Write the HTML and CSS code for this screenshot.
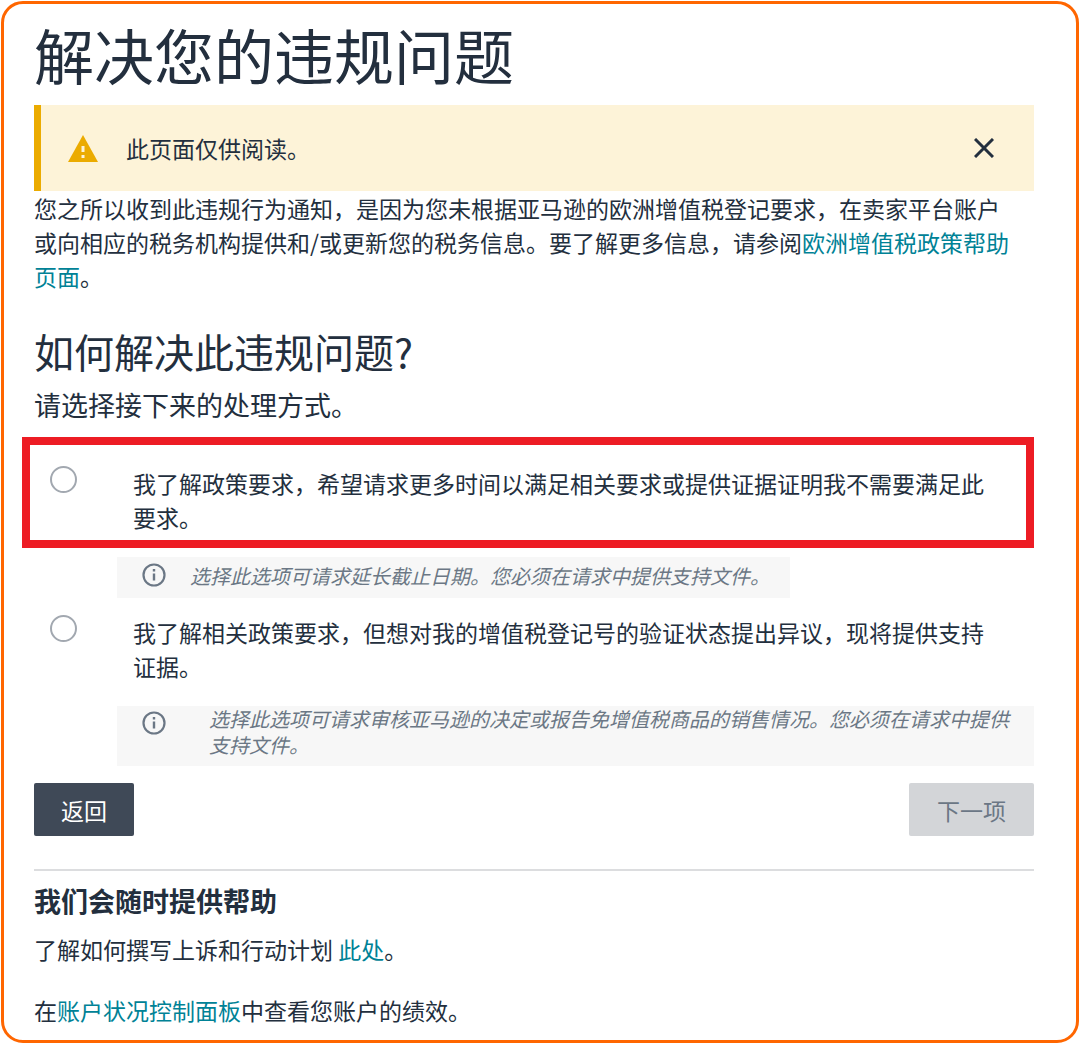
FILE: index.html
```html
<!DOCTYPE html>
<html lang="zh-CN">
<head>
  <meta charset="UTF-8">
  <meta name="viewport" content="width=device-width, initial-scale=1">
  <title>解决您的违规问题</title>
  <link rel="stylesheet" href="styles.css">
</head>
<body>
  <main class="card">
    <h1>解决您的违规问题</h1>

    <div class="alert" role="alert">
      <svg class="alert-icon" viewBox="0 0 30 27" aria-hidden="true">
        <path d="M15 0 L30 27 H0 Z" fill="#ebab00"/>
        <path d="M13.500 11 h3 v6 h-3 z M13.500 20 h3 v3 h-3 z" fill="#fdf3d8"/>
      </svg>
      <span class="alert-text">此页面仅供阅读。</span>
      <button type="button" class="alert-close" aria-label="关闭">
        <svg viewBox="0 0 20 20" aria-hidden="true">
          <path d="M1 1 L19 19 M19 1 L1 19" fill="none" stroke="#232f3e" stroke-width="3"/>
        </svg>
      </button>
    </div>

    <p class="intro">您之所以收到此违规行为通知，是因为您未根据亚马逊的欧洲增值税登记要求，在卖家平台账户或向相应的税务机构提供和/或更新您的税务信息。要了解更多信息，请参阅<a href="#">欧洲增值税政策帮助页面</a>。</p>

    <form id="resolveForm">
      <h2>如何解决此违规问题?</h2>
      <p class="lead">请选择接下来的处理方式。</p>

      <div class="option option-highlight">
        <input type="radio" id="moreTime" name="resolution" value="more-time">
        <label for="moreTime">我了解政策要求，希望请求更多时间以满足相关要求或提供证据证明我不需要满足此要求。</label>
      </div>
      <div class="hint hint-short">
        <svg class="info-icon" viewBox="0 0 24 24" aria-hidden="true">
          <circle cx="12" cy="12" r="10.500" fill="none" stroke="#6b7785" stroke-width="2.200"/>
          <path d="M12 6 v2.600 M12 10.500 v7" stroke="#6b7785" stroke-width="2.400"/>
        </svg>
        <em>选择此选项可请求延长截止日期。您必须在请求中提供支持文件。</em>
      </div>

      <div class="option">
        <input type="radio" id="dispute" name="resolution" value="dispute">
        <label for="dispute">我了解相关政策要求，但想对我的增值税登记号的验证状态提出异议，现将提供支持证据。</label>
      </div>
      <div class="hint hint-long">
        <svg class="info-icon" viewBox="0 0 24 24" aria-hidden="true">
          <circle cx="12" cy="12" r="10.500" fill="none" stroke="#6b7785" stroke-width="2.200"/>
          <path d="M12 6 v2.600 M12 10.500 v7" stroke="#6b7785" stroke-width="2.400"/>
        </svg>
        <em>选择此选项可请求审核亚马逊的决定或报告免增值税商品的销售情况。您必须在请求中提供支持文件。</em>
      </div>

      <div class="actions">
        <button type="button" class="btn btn-back">返回</button>
        <button type="submit" class="btn btn-next" disabled>下一项</button>
      </div>
    </form>

    <section class="help">
      <h3>我们会随时提供帮助</h3>
      <p>了解如何撰写上诉和行动计划 <a href="#">此处</a>。</p>
      <p>在<a href="#">账户状况控制面板</a>中查看您账户的绩效。</p>
    </section>
  </main>
</body>
</html>
```

FILE: styles.css
```css
* {
  box-sizing: border-box;
}
body {
  margin: 0;
  padding: 1px;
  background: #fff;
  color: #232f3e;
  font-family: "Noto Sans CJK SC", sans-serif;
  font-size: 23px;
  line-height: 34px;
}
h1, h2, h3, p {
  margin: 0;
}
a {
  color: #008296;
  text-decoration: none;
}
a:hover {
  text-decoration: underline;
}
button {
  font-family: inherit;
  cursor: pointer;
}
.card {
  min-height: calc(100vh - 2px);
  padding: 14px 42px 10px 30px;
  border: 3px solid #ff6600;
  border-radius: 22px;
}
h1 {
  margin-bottom: 15px;
  font-size: 60px;
  font-weight: 400;
  line-height: 72px;
}
h2 {
  font-size: 40px;
  font-weight: 400;
  line-height: 48px;
}

/* Alert */
.alert {
  display: flex;
  align-items: center;
  padding: 26px 40px 26px 27px;
  border-left: 7px solid #ebab00;
  background: #fdf3d8;
}
.alert-icon {
  width: 30px;
  height: 27px;
  margin-right: 28px;
}
.alert-text {
  flex: 1;
}
.alert-close {
  width: 20px;
  height: 20px;
  padding: 0;
  border: none;
  background: none;
}
.alert-close svg {
  display: block;
}
.intro {
  padding-right: 16px;
  margin-bottom: 34px;
}
.lead {
  margin: 12px 0 14px;
  font-size: 27px;
  line-height: 36px;
}

/* Options */
.option {
  display: flex;
  align-items: flex-start;
  gap: 56px;
  margin-top: 17px;
  padding: 0 36px 0 16px;
}
.option-highlight {
  margin: 0 0 9px -12px;
  padding: 21px 28px 6px 20px;
  border: 8px solid #ed1c24;
}
.option input {
  appearance: none;
  flex: none;
  width: 27px;
  height: 27px;
  margin: 0;
  border: 2px solid #a2a8b0;
  border-radius: 50%;
  background: #fff;
}
.option input:checked {
  border: 8px solid #008296;
}
.hint {
  display: flex;
  align-items: flex-start;
  margin-left: 83px;
  background: #f7f7f7;
  color: #6b7785;
  font-size: 20px;
  line-height: 26px;
}
.hint-short {
  width: fit-content;
  padding: 6px 20px 9px 25px;
}
.hint-long {
  margin-top: 23px;
  padding: 0 20px 8px 25px;
}
.info-icon {
  flex: none;
  width: 24px;
  height: 24px;
  margin-right: 24px;
}
.hint-long .info-icon {
  margin: 5px 43px 0 0;
}

/* Buttons */
.actions {
  display: flex;
  justify-content: space-between;
  margin: 17px 0 33px;
}
.btn {
  padding: 10px 27px 9px;
  border: none;
  border-radius: 2px;
  font-size: 23px;
  line-height: 34px;
}
.btn-back {
  background: #3f4957;
  color: #fff;
}
.btn-next {
  padding: 10px 28px 9px;
  background: #d3d5d8;
  color: #6b7785;
  cursor: default;
}

/* Help */
.help {
  padding-top: 12px;
  border-top: 2px solid #dcdddf;
}
h3 {
  margin-bottom: 13px;
  font-size: 27px;
  line-height: 36px;
}
.help p + p {
  margin-top: 27px;
}
```
